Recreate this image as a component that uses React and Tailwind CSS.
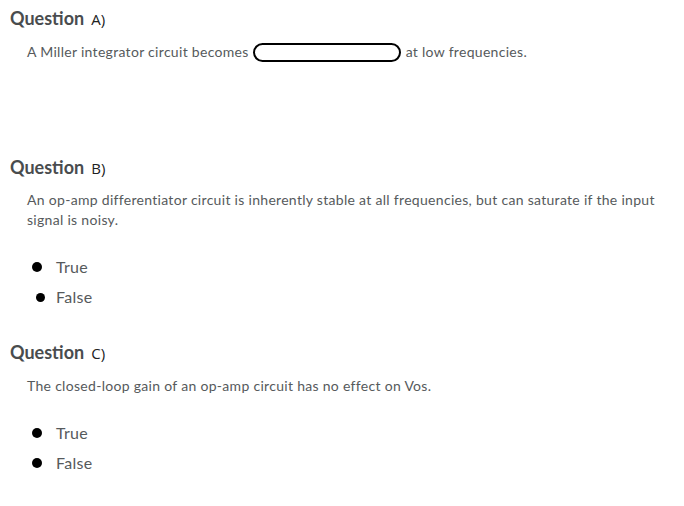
function Heading({ label }) {
  return (
    <h2 className="flex items-baseline gap-[7px] text-[18px] leading-[24px] font-bold text-[#494c4e]">
      <span>Question</span>
      <span className="text-[15px] font-normal text-[#202122] font-['Open_Sans',sans-serif]">{label}</span>
    </h2>
  );
}

function Choices({ items, dots }) {
  return (
    <ul className="mt-[27px] flex flex-col gap-[10px] pl-[22px]">
      {items.map((item, i) => (
        <li key={item} className="flex items-center h-[20px] text-[16px] tracking-[0.3px] text-[#565a5c]">
          <span className="w-[24px] flex items-center">
            <span className={`inline-block rounded-full bg-black ${dots[i]}`} />
          </span>
          <span>{item}</span>
        </li>
      ))}
    </ul>
  );
}

export default function App() {
  return (
    <div className="w-[684px] h-[506px] bg-white font-['Lato',sans-serif] overflow-hidden">
      <section className="pl-[10px] pt-[6px]">
        <Heading label="A)" />
        <p className="mt-[11px] pl-[17px] flex items-center text-[14px] tracking-[0.3px] text-[#565a5c] leading-[20px]">
          <span>A Miller integrator circuit becomes</span>
          <span className="ml-[4px] inline-block w-[148px] h-[19px] rounded-full border-2 border-black" />
          <span className="ml-[5px]">at low frequencies.</span>
        </p>
      </section>

      <section className="pl-[10px] mt-[93px]">
        <Heading label="B)" />
        <p className="mt-[10px] pl-[17px] pr-[20px] text-[14px] tracking-[0.3px] text-[#565a5c] leading-[20px]">
          An op-amp differentiator circuit is inherently stable at all frequencies, but can saturate if the input signal is noisy.
        </p>
        <Choices items={["True", "False"]} dots={["w-[10px] h-[10px]", "w-[9px] h-[9px] ml-[4px]"]} />
      </section>

      <section className="pl-[10px] mt-[33px]">
        <Heading label="C)" />
        <p className="mt-[11px] pl-[17px] text-[14px] tracking-[0.3px] text-[#565a5c] leading-[20px]">
          The closed-loop gain of an op-amp circuit has no effect on Vos.
        </p>
        <Choices items={["True", "False"]} dots={["w-[10px] h-[10px]", "w-[10px] h-[10px]"]} />
      </section>
    </div>
  );
}
